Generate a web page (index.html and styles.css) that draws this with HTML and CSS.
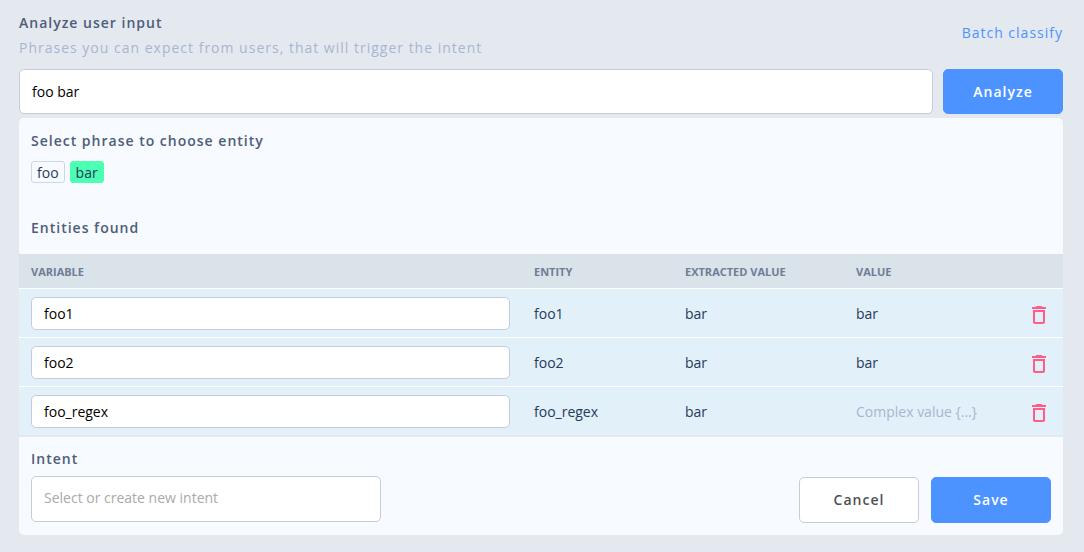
FILE: index.html
```html
<!DOCTYPE html>
<html lang="en">
<head>
<meta charset="utf-8">
<meta name="viewport" content="width=device-width, initial-scale=1">
<title>Analyze user input</title>
<link rel="stylesheet" href="styles.css">
</head>
<body>
<svg class="sprite" aria-hidden="true">
  <symbol id="trash" viewBox="0 0 24 24">
    <path d="M6 19c0 1.1.9 2 2 2h8c1.1 0 2-.9 2-2V7H6v12zM8 9h8v10H8V9zm7.5-5l-1-1h-5l-1 1H5v2h14V4h-3.5z"/>
  </symbol>
</svg>
<main class="page">
  <header class="intro">
    <div>
      <h1 class="title"><label for="phrase">Analyze user input</label></h1>
      <p class="hint">Phrases you can expect from users, that will trigger the intent</p>
    </div>
    <a class="link" href="#batch">Batch classify</a>
  </header>
  <form class="analyze">
    <input class="field field-large" id="phrase" type="text" value="foo bar">
    <button class="button button-primary" type="button">Analyze</button>
  </form>

  <section class="panel">
    <div class="phrases">
      <h2 class="title">Select phrase to choose entity</h2>
      <div class="tokens">
        <button class="token" type="button">foo</button>
        <button class="token token-selected" type="button">bar</button>
      </div>
      <h2 class="title">Entities found</h2>
    </div>

    <table class="entities">
      <colgroup>
        <col>
        <col class="col-entity">
        <col class="col-extracted">
        <col class="col-value">
        <col class="col-action">
      </colgroup>
      <thead>
        <tr>
          <th scope="col">VARIABLE</th>
          <th scope="col">ENTITY</th>
          <th scope="col">EXTRACTED VALUE</th>
          <th scope="col">VALUE</th>
          <td></td>
        </tr>
      </thead>
      <tbody>
        <tr>
          <td class="variable"><input class="field" type="text" value="foo1" aria-label="Variable for foo1"></td>
          <td>foo1</td>
          <td>bar</td>
          <td>bar</td>
          <td class="action"><button class="delete" type="button" aria-label="Delete foo1"><svg class="icon"><use href="#trash"/></svg></button></td>
        </tr>
        <tr>
          <td class="variable"><input class="field" type="text" value="foo2" aria-label="Variable for foo2"></td>
          <td>foo2</td>
          <td>bar</td>
          <td>bar</td>
          <td class="action"><button class="delete" type="button" aria-label="Delete foo2"><svg class="icon"><use href="#trash"/></svg></button></td>
        </tr>
        <tr>
          <td class="variable"><input class="field" type="text" value="foo_regex" aria-label="Variable for foo_regex"></td>
          <td>foo_regex</td>
          <td>bar</td>
          <td class="complex">Complex value {...}</td>
          <td class="action"><button class="delete" type="button" aria-label="Delete foo_regex"><svg class="icon"><use href="#trash"/></svg></button></td>
        </tr>
      </tbody>
    </table>

    <form class="intent">
      <div class="intent-field">
        <label class="title" for="intent">Intent</label>
        <input class="field field-intent" id="intent" type="text" placeholder="Select or create new intent">
      </div>
      <div class="actions">
        <button class="button" type="button">Cancel</button>
        <button class="button button-primary" type="button">Save</button>
      </div>
    </form>
  </section>
</main>
</body>
</html>
```
FILE: styles.css
```css
* {
  box-sizing: border-box;
}

body {
  margin: 0;
  background: #e4e9f0;
  color: #27395b;
  font: 14px/20px "Open Sans", sans-serif;
}

h1,
h2,
p {
  margin: 0;
}

button,
input {
  font: inherit;
}

button {
  cursor: pointer;
}

.sprite {
  position: absolute;
  width: 0;
  height: 0;
}

.page {
  padding: 13px 21px 17px 19px;
}

.intro {
  display: flex;
  justify-content: space-between;
  padding-bottom: 11px;
}

.title {
  color: #4e5d78;
  font-size: 14px;
  font-weight: 600;
  line-height: 20px;
  letter-spacing: 1px;
}

.hint {
  margin-top: 5px;
  color: #a8b5d1;
  letter-spacing: 1px;
}

.link {
  margin-top: 10px;
  color: #4c93ff;
  letter-spacing: 1px;
  text-decoration: none;
}

.analyze {
  display: flex;
  gap: 10px;
  margin-bottom: 4px;
}

.field {
  display: block;
  width: 100%;
  height: 33px;
  padding: 0 12px;
  border: 1px solid #c8ccda;
  border-radius: 5px;
  background: #fff;
  color: #000;
}

.field::placeholder {
  color: #aaa;
  opacity: 1;
}

.field-large {
  flex: 1;
  min-width: 0;
  height: 45px;
}

.button {
  width: 120px;
  min-height: 45px;
  padding: 0;
  border: 1px solid #c8ccda;
  border-radius: 5px;
  background: #fff;
  color: #4d5057;
  font-weight: 600;
  letter-spacing: 1px;
}

.button-primary {
  border-color: #4c93ff;
  background: #4c93ff;
  color: #fff;
}

.panel {
  border-radius: 5px;
  background: #f7faff;
}

.phrases {
  padding: 13px 12px 16px;
}

.tokens {
  display: flex;
  gap: 5px;
  padding: 10px 0 35px;
}

.token {
  height: 22px;
  padding: 2px 5px 0;
  border: 1px solid #cbd8e6;
  border-radius: 3px;
  background: #f7faff;
  color: #27395b;
  line-height: 18px;
}

.token-selected {
  border-color: #4dffb2;
  background: #4dffb2;
}

.entities {
  width: 100%;
  border-collapse: separate;
  border-spacing: 0;
  border-bottom: 2px solid #e4e9f0;
  table-layout: fixed;
}

.col-entity {
  width: 151px;
}

.col-extracted {
  width: 171px;
}

.col-value {
  width: 171px;
}

.col-action {
  width: 48px;
}

.entities thead tr {
  height: 34px;
  background: #dae2ea;
}

.entities th {
  padding: 2px 12px 0;
  color: #6f7d95;
  font-size: 11px;
  font-weight: 700;
  text-align: left;
}

.entities tbody tr {
  background: #e1f0f9;
}

.entities tbody td {
  height: 49px;
  padding: 2px 12px 0;
  border-top: 1px solid #fff;
}

.entities tbody .variable {
  padding-top: 0;
}

.entities tbody .action {
  padding-top: 4px;
}

.entities .complex {
  color: #a8b5d1;
}

.delete {
  display: block;
  padding: 0;
  border: 0;
  background: none;
}

.icon {
  display: block;
  width: 24px;
  height: 24px;
  fill: #ff5c8a;
}

.intent {
  display: flex;
  align-items: flex-end;
  justify-content: space-between;
  gap: 12px;
  padding: 12px;
}

.intent-field {
  flex: 0 1 350px;
  padding-bottom: 1px;
}

.intent-field .title {
  display: block;
  margin-bottom: 7px;
}

.field-intent {
  height: 46px;
  padding-bottom: 3px;
}

.actions {
  display: flex;
  gap: 12px;
}

.actions .button {
  min-height: 46px;
}
```
